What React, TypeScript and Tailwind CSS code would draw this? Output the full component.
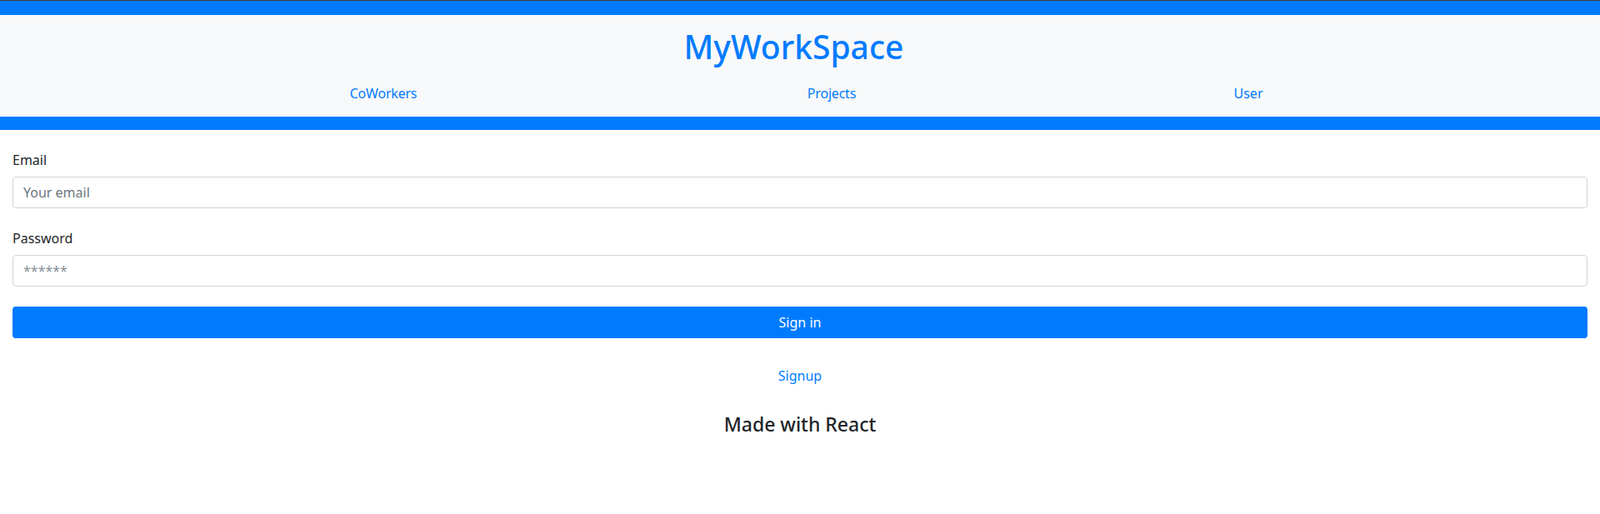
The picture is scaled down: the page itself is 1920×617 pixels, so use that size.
const font = { fontFamily: '"Noto Sans", "Open Sans", "Liberation Sans", sans-serif' };

export default function App() {
  return (
    <div className="min-h-screen bg-white text-[#212529]" style={font}>
      <div className="h-[18px] bg-[#007bff] border-t border-[#3c3c3c]" />
      <header className="bg-[#f8f9fa] pt-[14px] pb-[8px]">
        <h1 className="pr-[15px] text-center text-[39px] leading-[48px] font-medium text-[#007bff]">
          MyWorkSpace
        </h1>
        <nav className="mt-[12px] flex text-base leading-6">
          <div className="ml-[360px] w-[200px] text-center py-2">
            <a href="#" className="text-[#007bff] tracking-[-0.2px]">CoWorkers</a>
          </div>
          <div className="ml-[338px] w-[200px] text-center py-2">
            <a href="#" className="text-[#007bff] tracking-[-0.2px]">Projects</a>
          </div>
          <div className="ml-[300px] w-[200px] text-center py-2">
            <a href="#" className="text-[#007bff]">User</a>
          </div>
        </nav>
      </header>
      <div className="h-[16px] bg-[#007bff]" />

      <div className="px-[15px] pt-[24px]">
        <form onSubmit={e => e.preventDefault()}>
          <div className="mb-[24px]">
            <label className="mb-2 block text-base leading-6">Email</label>
            <input
              type="email"
              placeholder="Your email"
              className="block h-[38px] w-full rounded border border-[#ced4da] px-3 text-base text-[#495057] placeholder:text-[#6c757d] outline-none"
            />
          </div>
          <div className="mb-[24px]">
            <label className="mb-2 block text-base leading-6">Password</label>
            <input
              type="password"
              placeholder="******"
              className="block h-[38px] w-full rounded border border-[#ced4da] px-3 text-base text-[#495057] placeholder:text-[#868e96] outline-none"
            />
          </div>
          <button
            type="submit"
            className="block h-[38px] w-full rounded bg-[#007bff] text-base text-white"
          >
            Sign in
          </button>
        </form>

        <div className="mt-[33px] text-center text-base leading-6">
          <a href="#" className="text-[#007bff]">Signup</a>
        </div>
        <h4 className="mt-[32px] text-center text-[23px] leading-[29px] font-medium">
          Made with React
        </h4>
      </div>
    </div>
  );
}
